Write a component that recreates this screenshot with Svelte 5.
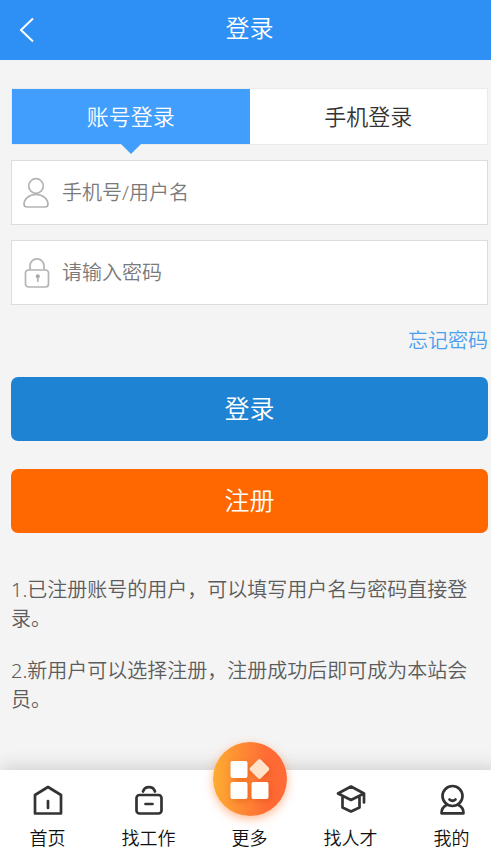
<script>
	let mode = $state('account');
	let account = $state('');
	let password = $state('');

	const tabs = [
		{ id: 'account', label: '账号登录' },
		{ id: 'phone', label: '手机登录' }
	];

	const navItems = [
		{ id: 'home', label: '首页' },
		{ id: 'jobs', label: '找工作' },
		{ id: 'more', label: '更多' },
		{ id: 'talent', label: '找人才' },
		{ id: 'mine', label: '我的' }
	];
</script>

<div class="viewport">
	<div class="page">
		<header>
			<a href="#back" class="back" aria-label="返回">
				<svg width="16" height="26" viewBox="0 0 16 26"><path d="M14 1.5 2 13l12 11.5" /></svg>
			</a>
			<h1>登录</h1>
		</header>

		<main>
			<div class="tabs">
				{#each tabs as tab (tab.id)}
					<button type="button" class="tab" class:active={mode === tab.id} onclick={() => (mode = tab.id)}>
						{tab.label}
					</button>
				{/each}
			</div>

			<form onsubmit={(e) => e.preventDefault()}>
				<label class="field">
					<svg width="32" height="32" viewBox="0 0 32 32">
						<circle cx="16" cy="9" r="7.3" />
						<path d="M16 17.500C8.500 17.500 4 22.500 4 27q0 3 3 3h18q3 0 3-3c0-4.500-4.500-9.500-12-9.500z" />
					</svg>
					<input type="text" placeholder="手机号/用户名" aria-label="手机号/用户名" bind:value={account} />
				</label>
				<label class="field">
					<svg width="32" height="32" viewBox="0 0 32 32">
						<rect x="5.500" y="13" width="23" height="17" rx="3" />
						<path d="M10 13V8.800a7 7 0 0 1 14 0V13M17.800 19v6" />
						<circle class="keyhole" cx="17.800" cy="19.200" r="2" />
					</svg>
					<input type="password" placeholder="请输入密码" aria-label="请输入密码" bind:value={password} />
				</label>
				<a href="#forgot" class="forgot">忘记密码</a>
				<button type="submit" class="btn login">登录</button>
				<button type="button" class="btn register">注册</button>
			</form>

			<div class="tips">
				<p>1.已注册账号的用户，可以填写用户名与密码直接登录。</p>
				<p>2.新用户可以选择注册，注册成功后即可成为本站会员。</p>
			</div>
		</main>

		<nav>
			<div class="items">
				{#each navItems as item (item.id)}
					<a href="#{item.id}" class="item">
						{#if item.id === 'more'}
							<span class="more">
								<svg width="74" height="74" viewBox="0 0 74 74">
									<rect x="17.500" y="19" width="17" height="17" rx="2" />
									<rect x="17.500" y="40" width="17" height="17" rx="2" />
									<rect x="38.500" y="40" width="17" height="17" rx="2" />
									<rect class="diamond" x="39" y="19.500" width="15" height="15" rx="2" transform="rotate(45 46.5 27)" />
								</svg>
							</span>
						{:else}
							<svg width="32" height="32" viewBox="0 0 32 32">
								{#if item.id === 'home'}
									<path d="M3 11 16 3l13 8v18.500H3zM16 17v7" />
								{:else if item.id === 'jobs'}
									<rect x="3.500" y="11" width="25" height="18.500" rx="3" />
									<path d="M10 7.500a6.300 6.300 0 0 1 12 0M12.500 20h7" />
								{:else if item.id === 'talent'}
									<path d="M3 9.500l13-7 13 7-13 6.500zM7.500 13v10.500l8.500 4 8.500-4V13M29 9.500v9" />
								{:else}
									<circle cx="16.500" cy="12" r="10" />
									<path d="M13.500 15.500q3 2.500 6 0M10.500 21C7.500 22.500 5.500 25.500 5.500 29.300h22c0-3.800-2-6.800-5-8.300" />
								{/if}
							</svg>
						{/if}
						<span>{item.label}</span>
					</a>
				{/each}
			</div>
		</nav>
	</div>
</div>

<style>
	:global(body) {
		margin: 0;
		background: #f4f4f4;
		font-family: 'Noto Sans', 'Noto Sans CJK SC', sans-serif;
		font-weight: 350;
	}
	.viewport {
		overflow: hidden;
	}
	/* the page runs slightly past the right edge of the window */
	.page {
		display: flex;
		flex-direction: column;
		width: calc(100% + 8px);
		min-height: 100vh;
	}
	button,
	input {
		font-family: inherit;
		font-weight: inherit;
	}
	a {
		text-decoration: none;
	}
	svg {
		display: block;
		flex: none;
		fill: none;
	}
	header {
		display: grid;
		grid-template-columns: 60px 1fr 60px;
		align-items: center;
		height: 60px;
		background: #2e90f4;
	}
	.back {
		padding-left: 19px;
	}
	.back svg {
		stroke: #fff;
		stroke-width: 2;
	}
	h1 {
		margin: 0;
		padding-bottom: 4px;
		color: #fff;
		font-size: 24px;
		font-weight: inherit;
		line-height: 36px;
		text-align: center;
	}
	main {
		flex: 1;
		padding: 28px 11px 0;
	}
	.tabs {
		display: grid;
		grid-template-columns: 1fr 1fr;
		border: 1px solid #ebebeb;
		background: #fff;
	}
	.tab {
		position: relative;
		height: 55px;
		padding: 0 0 4px;
		border: 0;
		background: none;
		color: #333;
		font-size: 22px;
	}
	.tab.active {
		background: #429efd;
		color: #fff;
	}
	.tab.active::after {
		content: '';
		position: absolute;
		top: 100%;
		left: 50%;
		margin-left: -10px;
		border: 10px solid transparent;
		border-top-color: #429efd;
		border-bottom: 0;
	}
	form {
		display: flex;
		flex-direction: column;
		padding-top: 15px;
	}
	.field {
		display: flex;
		align-items: center;
		gap: 10px;
		height: 63px;
		margin-bottom: 15px;
		padding: 0 8px;
		border: 1px solid #dcdcdc;
		background: #fff;
	}
	.field svg {
		stroke: #b4b4b4;
		stroke-width: 1.7;
	}
	.field .keyhole {
		fill: #a8a8a8;
		stroke: none;
	}
	.field input {
		flex: 1;
		min-width: 0;
		height: 40px;
		padding: 0;
		border: 0;
		outline: 0;
		background: none;
		color: #333;
		font-size: 20px;
	}
	.field input::placeholder {
		color: #7a7a7a;
	}
	.forgot {
		align-self: flex-end;
		margin: 6px 0 21px;
		color: #4a9ff0;
		font-size: 20px;
		line-height: 30px;
	}
	.btn {
		height: 64px;
		padding: 0 0 4px;
		border: 0;
		border-radius: 7px;
		color: #fff;
		font-size: 25px;
	}
	.login {
		margin-bottom: 28px;
		background: #1f83d4;
	}
	.register {
		background: #ff6700;
	}
	.tips {
		padding: 42px 0 24px;
		color: #5c5c5c;
		font-size: 20px;
		line-height: 29px;
	}
	.tips p {
		margin: 0 0 23px;
	}
	nav {
		background: #fff;
		box-shadow: 0 0 20px rgba(0, 0, 0, 0.2);
	}
	.items {
		display: grid;
		grid-template-columns: repeat(5, 1fr);
		margin: 0 -3px;
	}
	.item {
		display: flex;
		flex-direction: column;
		align-items: center;
		gap: 10px;
		padding-top: 14px;
		color: #111;
		font-size: 18px;
		line-height: 24px;
	}
	.item > svg {
		stroke: #333;
		stroke-width: 2.7;
		stroke-linejoin: round;
		stroke-linecap: round;
	}
	.more {
		margin-top: -42px;
		border-radius: 50%;
		background: linear-gradient(90deg, #fdac32, #ff6a35 75%);
		box-shadow: 0 3px 10px rgba(255, 120, 40, 0.5);
	}
	.more svg {
		fill: #fff;
		filter: drop-shadow(2px 2px 3px rgba(200, 60, 0, 0.35));
	}
	.more .diamond {
		fill: #ffe2c8;
	}
</style>
